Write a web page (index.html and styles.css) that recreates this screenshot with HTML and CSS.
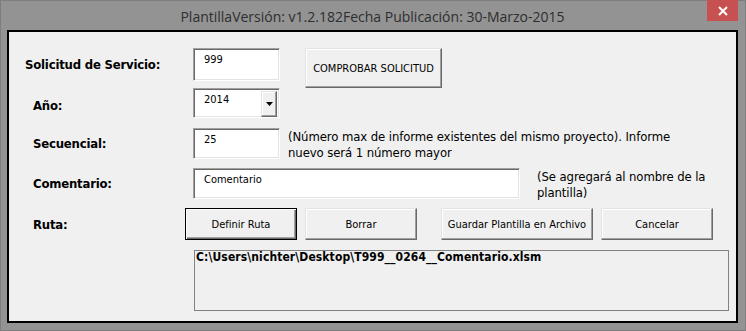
FILE: index.html
```html
<!DOCTYPE html>
<html lang="es">
<head>
  <meta charset="UTF-8" />
  <title>Plantilla</title>
  <link rel="stylesheet" href="styles.css">
</head>
<body>
  <div class="window">
    <div class="titlebar">
      <span class="title">PlantillaVersión: v1.2.182Fecha Publicación: 30-Marzo-2015</span>
      <div class="close">
        <svg width="10" height="10" viewBox="0 0 10 10"><path d="M1 1 L9 9 M9 1 L1 9" stroke="#fff" stroke-width="2"/></svg>
      </div>
    </div>

    <div class="client">
      <div class="row row-solicitud">
        <div class="label first">Solicitud de Servicio:</div>
        <div class="field field-small tall">999</div>
        <div class="btn btn-check">COMPROBAR SOLICITUD</div>
      </div>

      <div class="row row-anio">
        <div class="label label-anio">Año:</div>
        <div class="field field-small combo">
          2014
          <span class="drop"><svg width="7" height="4" viewBox="0 0 7 4"><path d="M0 0 H7 L3.5 4 Z" fill="#000"/></svg></span>
        </div>
      </div>

      <div class="row row-sec">
        <div class="label">Secuencial:</div>
        <div class="field field-small">25</div>
        <p class="note note-sec">(Número max de informe existentes del mismo proyecto). Informe<br>nuevo será 1 número mayor</p>
      </div>

      <div class="row row-com">
        <div class="label">Comentario:</div>
        <div class="field field-wide">Comentario</div>
        <p class="note note-com">(Se agregará al nombre de la<br>plantilla)</p>
      </div>

      <div class="row row-ruta">
        <div class="label label-ruta">Ruta:</div>
        <div class="btn btn-std default">Definir Ruta</div>
        <div class="btn btn-std">Borrar</div>
        <div class="btn btn-save">Guardar Plantilla en Archivo</div>
        <div class="btn btn-std">Cancelar</div>
      </div>

      <div class="path">C:\Users\nichter\Desktop\T999__0264__Comentario.xlsm</div>
    </div>
  </div>
</body>
</html>
```

FILE: styles.css
```css
* { margin: 0; padding: 0; box-sizing: border-box; }
body {
  background: #939393;
  font-family: "DejaVu Sans Condensed", "DejaVu Sans", sans-serif;
  font-stretch: condensed;
  color: #000;
}
.window {
  width: 746px;
  height: 331px;
  background: #939393;
  border: 1px solid #7e7e7e;
  padding: 0 7px 7px 6px;
  display: flex;
  flex-direction: column;
}
.titlebar {
  height: 29px;
  display: flex;
  justify-content: center;
  align-items: center;
  position: relative;
}
.title {
  font-family: "Open Sans", "Noto Sans", sans-serif;
  font-stretch: normal;
  font-size: 14px;
  color: #2e2e2e;
  margin-top: 1px;
}
.close {
  position: absolute;
  top: -1px;
  right: 0;
  width: 31px;
  height: 21px;
  background: #c75050;
  display: flex;
  align-items: center;
  justify-content: center;
}
.client {
  flex: 1;
  background: #f0f0f0;
  border: 2px solid #000;
  padding: 16px 0 0 0;
}
.row {
  display: flex;
  align-items: flex-start;
}
.label {
  width: 184px;
  padding-left: 24px;
  font-weight: bold;
  font-size: 13px;
  letter-spacing: -0.2px;
  align-self: stretch;
  display: flex;
  align-items: center;
}
.label.first { padding-left: 16px; align-self: flex-start; height: 33px; }
.label-anio { padding-top: 4px; }
.label-ruta { width: 176px; }

.field {
  height: 31px;
  background: #fff;
  border: 1px solid;
  border-color: #a0a0a0 #fff #fff #a0a0a0;
  box-shadow: inset 1px 1px #696969, inset -1px -1px #e3e3e3;
  font-size: 11px;
  padding: 4px 0 0 10px;
  position: relative;
}
.field-small { width: 87px; }
.field-wide { width: 327px; }
.field.tall { height: 33px; }
.combo { height: 30px; }
.drop {
  position: absolute;
  top: 2px;
  right: 2px;
  width: 16px;
  height: 26px;
  background: #f0f0f0;
  border: 1px solid;
  border-color: #e3e3e3 #696969 #696969 #e3e3e3;
  box-shadow: inset -1px -1px #a0a0a0, inset 1px 1px #fff;
  display: flex;
  align-items: center;
  justify-content: center;
}

.row-sec { margin-top: 10px; }
.row-com { margin-top: 9px; }
.row-ruta { margin-top: 9px; }

.note {
  font-size: 13px;
  line-height: 16px;
  letter-spacing: -0.1px;
  height: 31px;
  white-space: nowrap;
}
.note-sec { padding-top: 1px; margin-left: 8px; }
.note-com { padding-top: 1px; margin-left: 17px; }

.btn {
  height: 32px;
  background: #f0f0f0;
  border: 1px solid;
  border-color: #e3e3e3 #696969 #696969 #e3e3e3;
  box-shadow: inset -1px -1px #a0a0a0, inset 1px 1px #fff;
  font-size: 11px;
  display: flex;
  align-items: center;
  justify-content: center;
}
.btn-check {
  width: 137px;
  height: 40px;
  margin-left: 25px;
}
.btn-std { width: 112px; }
.btn-std + .btn-std { margin-left: 8px; }
.btn-save { width: 152px; margin-left: 24px; }
.btn-save + .btn-std { margin-left: 8px; }
.btn.default {
  border: 1px solid #000;
  box-shadow: inset 1px 1px #fff, inset -1px -1px #696969, inset -2px -2px #a0a0a0;
}

.path {
  margin: 10px 0 0 185px;
  width: 535px;
  height: 61px;
  border: 1px solid #828282;
  font-size: 12px;
  font-weight: bold;
  line-height: 13px;
  letter-spacing: 0.1px;
  padding: 0 0 0 1px;
}
```
